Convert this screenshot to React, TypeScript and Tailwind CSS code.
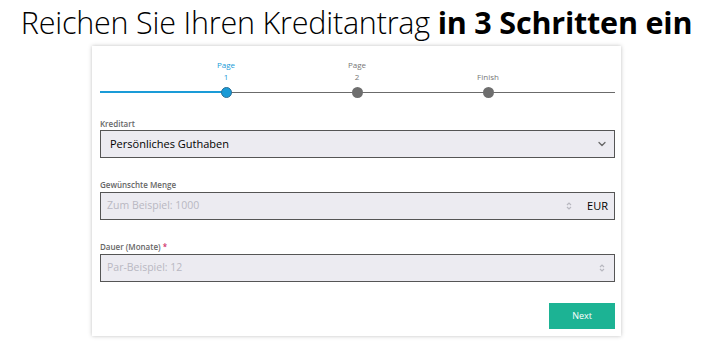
import { ChevronDown } from "lucide-react";

function Spinner() {
  return (
    <svg width="6" height="10" viewBox="0 0 6 10" className="text-[#b8b8c0]">
      <path d="M1 4 L3 2 L5 4" fill="none" stroke="currentColor" strokeWidth="1.2" />
      <path d="M1 6 L3 8 L5 6" fill="none" stroke="currentColor" strokeWidth="1.2" />
    </svg>
  );
}

const steps = [
  { top: "Page", bottom: "1", active: true },
  { top: "Page", bottom: "2", active: false },
  { top: "", bottom: "Finish", active: false },
];

export default function App() {
  return (
    <div className="w-[713px] h-[347px] bg-white overflow-hidden font-['Open_Sans',sans-serif]">
      <h1 className="text-center text-[30.5px] leading-[38px] pt-[3px] text-black font-light tracking-[-0.2px]">
        Reichen Sie Ihren Kreditantrag <span className="font-bold">in 3 Schritten ein</span>
      </h1>

      <div className="ml-[92px] mt-[5px] w-[529px] h-[290px] bg-white shadow-[0_0_4px_rgba(0,0,0,0.25)] pl-[8px] pr-[6px] pt-[13px]">
        {/* stepper */}
        <div className="relative h-[38px]">
          <div className="absolute left-0 right-0 top-[33px] h-px bg-[#6b6b6b]" />
          <div className="absolute left-0 w-[126px] top-[32px] h-[2px] bg-[#1a9bd7]" />
          {steps.map((s, i) => (
            <div
              key={i}
              className="absolute top-0 flex flex-col items-center w-[40px]"
              style={{ left: 106 + i * 131 }}
            >
              <span className={`text-[8px] leading-[12px] h-[12px] ${s.active ? "text-[#1a9bd7]" : "text-[#777]"}`}>{s.top}</span>
              <span className={`text-[8px] leading-[12px] ${s.active ? "text-[#1a9bd7]" : "text-[#777]"}`}>{s.bottom}</span>
              <span className={`mt-[4px] w-[11px] h-[11px] rounded-full ${s.active ? "bg-[#1a9bd7] border border-[#2a6f96]" : "bg-[#6e6e6e]"}`} />
            </div>
          ))}
        </div>

        <div className="mt-[22px]">
          <div className="text-[8px] leading-[10px] font-semibold text-[#666]">Kreditart</div>
          <div className="mt-[1px] h-[28px] border border-[#555] bg-[#ecebf1] flex items-center pl-[9px] pr-[6px]">
            <span className="flex-1 text-[11px] text-black">Persönliches Guthaben</span>
            <ChevronDown className="w-[12px] h-[12px] text-[#666]" strokeWidth={2.5} />
          </div>
        </div>

        <div className="mt-[22px]">
          <div className="text-[8px] leading-[10px] font-semibold text-[#666]">Gewünschte Menge</div>
          <div className="mt-[2px] h-[28px] border border-[#555] bg-[#ecebf1] flex items-center pl-[6px] pr-[6px]">
            <span className="flex-1 text-[10.5px] text-[#b9b8c2]">Zum Beispiel: 1000</span>
            <Spinner />
            <span className="ml-[15px] text-[11px] text-black">EUR</span>
          </div>
        </div>

        <div className="mt-[22px]">
          <div className="text-[8px] leading-[10px] font-semibold text-[#666]">
            Dauer (Monate) <span className="text-[#d0306a]">*</span>
          </div>
          <div className="mt-[2px] h-[28px] border border-[#555] bg-[#ecebf1] flex items-center pl-[6px] pr-[9px]">
            <span className="flex-1 text-[10.5px] text-[#b9b8c2]">Par-Beispiel: 12</span>
            <Spinner />
          </div>
        </div>

        <div className="mt-[21px] flex justify-end">
          <button className="w-[66px] h-[26px] bg-[#1cb394] text-white text-[9px]">Next</button>
        </div>
      </div>
    </div>
  );
}
